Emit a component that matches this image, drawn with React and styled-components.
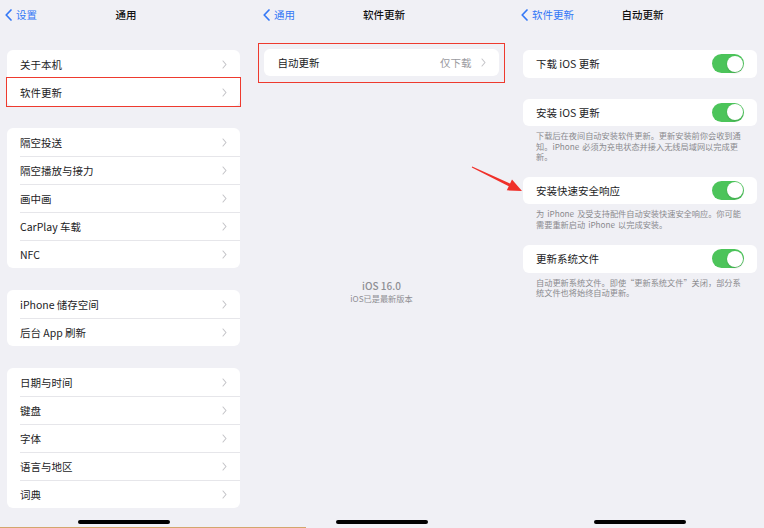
import React from "react";
import styled, { createGlobalStyle } from "styled-components";

const Global = createGlobalStyle`
  html, body { margin: 0; padding: 0; background: #f0f0f5; }
  body { font-family: "Noto Sans CJK SC", "Noto Sans", sans-serif; color: #1c1c1e; }
  * { box-sizing: border-box; }
`;

const Page = styled.div`
  position: relative;
  width: 764px;
  height: 528px;
  display: flex;
  gap: 11px;
  background: #f0f0f5;
  overflow: hidden;
`;

const Panel = styled.div`
  width: ${(p) => p.$w}px;
  height: 528px;
  display: flex;
  flex-direction: column;
  padding: 0 7px;
`;

const Nav = styled.div`
  height: 29px;
  margin-bottom: 1px;
  display: grid;
  grid-template-columns: 1fr auto 1fr;
  align-items: center;
  margin-left: -7px;
  margin-right: -7px;
  padding-left: 5px;
`;

const Back = styled.div`
  display: flex;
  align-items: center;
  gap: 4px;
  color: #3478f6;
  font-size: 10.5px;
`;

const Title = styled.div`
  font-size: 10.5px;
  font-weight: 500;
  color: #111;
`;

const Card = styled.div`
  background: #fff;
  border-radius: 6px;
  margin-top: ${(p) => p.$mt || 0}px;
`;

const HighlightBox = styled.div`
  margin: ${(p) => p.$mt}px -7px 0;
  padding: 5.4px;
  border: 1.6px solid #ee3a2e;
`;

const Row = styled.div`
  position: relative;
  height: ${(p) => p.$h || 28}px;
  display: flex;
  align-items: center;
  padding: 0 13px;
  font-size: 10.5px;
  color: #1c1c1e;
  outline: ${(p) => (p.$hl ? "1.6px solid #ee3a2e" : "none")};
  & + &::before {
    content: "";
    position: absolute;
    left: 13px;
    right: 0;
    top: 0;
    height: 1px;
    background: #e6e6ea;
  }
`;

const Label = styled.span`
  flex: 1;
`;

const Detail = styled.span`
  color: #9a9aa0;
  margin-right: 9px;
`;

const Footer = styled.div`
  font-size: 8.2px;
  line-height: 10.5px;
  word-spacing: 1.2px;
  color: #8a8a8e;
  padding: 0 13px;
  margin-top: 4px;
`;

const Version = styled.div`
  margin-top: 196px;
  text-align: center;
  color: #8e8e93;
`;

const VTitle = styled.div`
  font-size: 10px;
  font-weight: 500;
  line-height: 13px;
`;

const VSub = styled.div`
  font-size: 8.2px;
  line-height: 13px;
`;

const Home = styled.div`
  width: 92px;
  height: 4px;
  border-radius: 2px;
  background: #000;
  margin: auto auto 4px;
`;

const Switch = styled.div`
  width: 32px;
  height: 19px;
  border-radius: 10px;
  background: #4cc45a;
  display: flex;
  align-items: center;
  justify-content: flex-end;
  padding-right: 1.5px;
`;

const Knob = styled.div`
  width: 16px;
  height: 16px;
  border-radius: 50%;
  background: #fff;
  box-shadow: 0 1px 2px rgba(0, 0, 0, 0.15);
`;

const ArrowMark = styled.svg`
  position: absolute;
  left: 470px;
  top: 164px;
`;

const BottomLine = styled.div`
  position: absolute;
  left: 0;
  bottom: 0;
  width: 306px;
  height: 1px;
  background: #d4a66c;
`;

const Chevron = () => (
  <svg width="5" height="9" viewBox="0 0 5 9">
    <path d="M1 1 L4 4.5 L1 8" fill="none" stroke="#c4c4c8" strokeWidth="1.1" strokeLinecap="round" strokeLinejoin="round" />
  </svg>
);

const BackChevron = () => (
  <svg width="7" height="12" viewBox="0 0 7 12">
    <path d="M6 1 L1.2 6 L6 11" fill="none" stroke="#3478f6" strokeWidth="1.7" strokeLinecap="round" strokeLinejoin="round" />
  </svg>
);

const Toggle = () => (
  <Switch>
    <Knob />
  </Switch>
);

const NavBar = ({ back, title }) => (
  <Nav>
    <Back>
      <BackChevron />
      {back}
    </Back>
    <Title>{title}</Title>
    <span />
  </Nav>
);

const ListCard = ({ items, mt, hl }) => (
  <Card $mt={mt}>
    {items.map((t) => (
      <Row key={t} $hl={hl === t}>
        <Label>{t}</Label>
        <Chevron />
      </Row>
    ))}
  </Card>
);

const ToggleCard = ({ label, mt }) => (
  <Card $mt={mt}>
    <Row $h={27.5}>
      <Label>{label}</Label>
      <Toggle />
    </Row>
  </Card>
);

export default function App() {
  return (
    <>
      <Global />
      <Page>
        <Panel $w={247}>
          <NavBar back="设置" title="通用" />
          <ListCard mt={20} items={["关于本机", "软件更新"]} hl="软件更新" />
          <ListCard mt={22} items={["隔空投送", "隔空播放与接力", "画中画", "CarPlay 车载", "NFC"]} />
          <ListCard mt={22} items={["iPhone 储存空间", "后台 App 刷新"]} />
          <ListCard mt={22} items={["日期与时间", "键盘", "字体", "语言与地区", "词典"]} />
          <Home />
        </Panel>
        <Panel $w={247}>
          <NavBar back="通用" title="软件更新" />
          <HighlightBox $mt={13}>
            <Card>
              <Row $h={27}>
                <Label>自动更新</Label>
                <Detail>仅下载</Detail>
                <Chevron />
              </Row>
            </Card>
          </HighlightBox>
          <Version>
            <VTitle>iOS 16.0</VTitle>
            <VSub>iOS已是最新版本</VSub>
          </Version>
          <Home />
        </Panel>
        <Panel $w={248}>
          <NavBar back="软件更新" title="自动更新" />
          <ToggleCard mt={20} label="下载 iOS 更新" />
          <ToggleCard mt={21} label="安装 iOS 更新" />
          <Footer>下载后在夜间自动安装软件更新。更新安装前你会收到通知。iPhone 必须为充电状态并接入无线局域网以完成更新。</Footer>
          <ToggleCard mt={15} label="安装快速安全响应" />
          <Footer>为 iPhone 及受支持配件自动安装快速安全响应。你可能需要重新启动 iPhone 以完成安装。</Footer>
          <ToggleCard mt={16} label="更新系统文件" />
          <Footer>自动更新系统文件。即使“更新系统文件”关闭，部分系统文件也将始终自动更新。</Footer>
          <Home />
        </Panel>
        <ArrowMark width="56" height="32" viewBox="0 0 56 32">
          <polygon
            points="2.2,2.6 40.05,19.6 42,15.55 52,27 36.8,26.35 38.75,22.3 1.8,3.4"
            fill="#f0302a"
          />
        </ArrowMark>
        <BottomLine />
      </Page>
    </>
  );
}
